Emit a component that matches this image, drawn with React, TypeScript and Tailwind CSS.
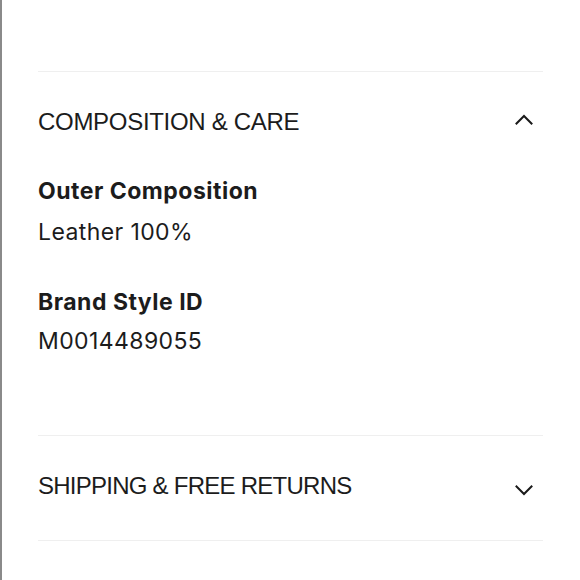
import React from "react";

function Chevron({ up }: { up: boolean }) {
  return (
    <svg width="18" height="12" viewBox="0 0 18 12" fill="none" className={up ? "mb-[6px]" : "mt-[9px]"}>
      <polyline
        points={up ? "1.5,10.5 9,3 16.5,10.5" : "1.5,1.5 9,9 16.5,1.5"}
        stroke="#1a1a1a"
        strokeWidth="2"
        strokeLinecap="square"
        fill="none"
      />
    </svg>
  );
}

export default function App() {
  const head = "text-[24px] leading-[28px] text-[#1c1c1c] font-['Liberation_Sans',Arial,sans-serif]";
  const label = "text-[23px] leading-[28px] font-bold tracking-[0.5px] text-[#1c1c1c] font-['Inter',sans-serif]";
  const value = "text-[23px] leading-[28px] tracking-[0.4px] text-[#1c1c1c] font-['Inter',sans-serif]";
  return (
    <div className="h-[580px] overflow-hidden bg-white border-l-2 border-[#8a8a8a]">
      <div className="ml-[36px] mr-[37px] pt-[71px]">
        <div className="border-t border-[#efefef]">
          <div className="flex items-center justify-between pt-[36px] pr-[10px]">
            <span className={`${head} tracking-[-0.3px]`}>COMPOSITION &amp; CARE</span>
            <Chevron up={true} />
          </div>
          <div className="pt-[41px] pb-[80px] flex flex-col gap-[42px]">
            <div className="flex flex-col gap-[13px]">
              <span className={label}>Outer Composition</span>
              <span className={value}>Leather 100%</span>
            </div>
            <div className="flex flex-col gap-[11px]">
              <span className={label}>Brand Style ID</span>
              <span className={value}>M0014489055</span>
            </div>
          </div>
        </div>
        <div className="border-t border-[#efefef]">
          <div className="flex items-center justify-between pt-[36px] pb-[40px] pr-[10px]">
            <span className={`${head} tracking-[-0.75px]`}>SHIPPING &amp; FREE RETURNS</span>
            <Chevron up={false} />
          </div>
        </div>
        <div className="border-t border-[#efefef]" />
      </div>
    </div>
  );
}
